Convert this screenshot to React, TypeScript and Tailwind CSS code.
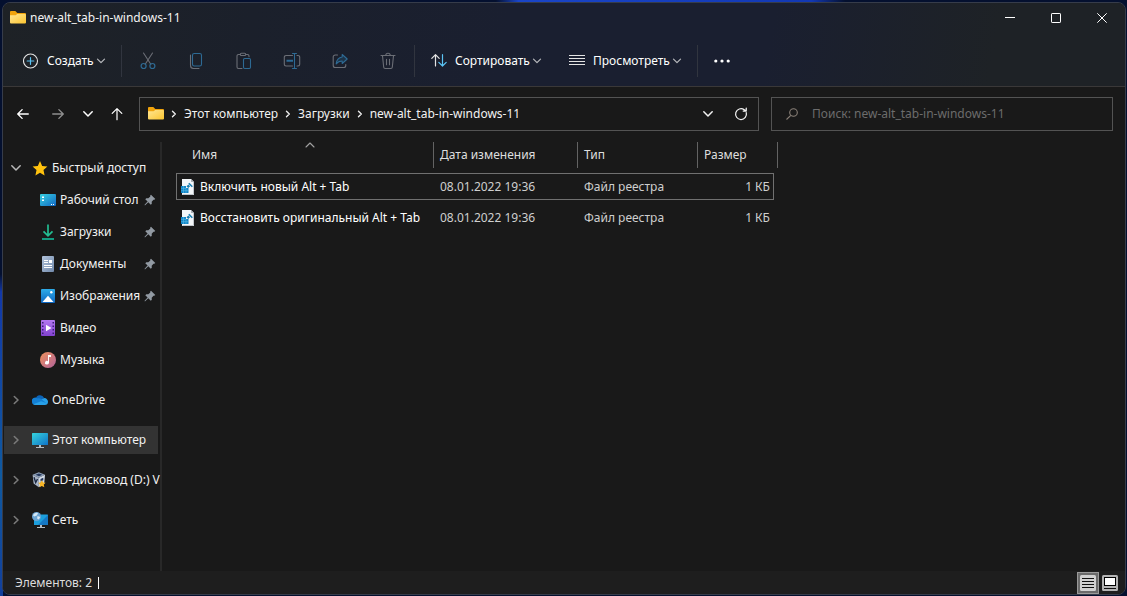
import type { ReactNode } from "react";

type IconProps = { className?: string };

function FolderIcon({ className = "size-4" }: IconProps) {
  return (
    <svg viewBox="0 0 16 16" className={className} aria-hidden="true">
      <defs>
        <linearGradient id="folder-front" x1="0" y1="0" x2="1" y2="1">
          <stop offset="0" stopColor="#ffe694" />
          <stop offset="1" stopColor="#fcc52f" />
        </linearGradient>
      </defs>
      <path d="M0 2a1 1 0 0 1 1-1h4.300l2 2H15a1 1 0 0 1 1 1v8H0z" fill="#f0a30c" />
      <path d="M0 5.200h5.600L7.300 4H15a1 1 0 0 1 1 1v7.500a1 1 0 0 1-1 1H1a1 1 0 0 1-1-1z" fill="url(#folder-front)" />
    </svg>
  );
}

function Stroke({ d, box = 16, width = 1.2, className }: { d: string; box?: number; width?: number; className: string }) {
  return (
    <svg
      viewBox={`0 0 ${box} ${box}`}
      className={className}
      fill="none"
      stroke="currentColor"
      strokeWidth={width}
      strokeLinecap="round"
      strokeLinejoin="round"
      aria-hidden="true"
    >
      <path d={d} />
    </svg>
  );
}

const ChevronDown = ({ className }: { className: string }) => <Stroke box={8} width={1} d="M1.200 2.500 4 5.300l2.800-2.800" className={className} />;

const PlusCircle = () => (
  <svg viewBox="0 0 16 16" className="size-4" fill="none" aria-hidden="true">
    <circle cx="7.500" cy="7" r="7" stroke="#e4e4e4" strokeWidth="1.100" className="translate-y-px" />
    <path d="M7.500 4.700v6.600M4.200 8h6.600" stroke="#5bc4f5" strokeWidth="1.200" strokeLinecap="round" />
  </svg>
);

const CutIcon = () => (
  <svg viewBox="0 0 16 18" className="h-4.5 w-4" fill="none" aria-hidden="true">
    <path d="M3.500 1 10.800 12.300M12.500 1 5.200 12.300" stroke="#6b6e76" strokeWidth="1.100" strokeLinecap="round" />
    <circle cx="3.600" cy="14" r="2.500" stroke="#2d6a94" strokeWidth="1.200" />
    <circle cx="12.400" cy="14" r="2.500" stroke="#2d6a94" strokeWidth="1.200" />
  </svg>
);

const CopyIcon = () => (
  <svg viewBox="0 0 16 18" className="h-4.5 w-4" fill="none" strokeWidth="1.100" aria-hidden="true">
    <path d="M2.500 3v10.500a3 3 0 0 0 3 3H11" stroke="#6b6e76" strokeLinecap="round" />
    <rect x="4.500" y="1.500" width="9" height="12.500" rx="1.800" stroke="#2d6a94" />
  </svg>
);

const PasteIcon = () => (
  <svg viewBox="0 0 16 18" className="h-4.5 w-4" fill="none" strokeWidth="1.100" aria-hidden="true">
    <path d="M6 16.500H2.500a1.500 1.500 0 0 1-1.500-1.500V4a1.500 1.500 0 0 1 1.500-1.500h1.700M9.800 2.500h1.700A1.500 1.500 0 0 1 13 4v.8" stroke="#6b6e76" strokeLinecap="round" />
    <rect x="4.300" y="1.300" width="5.400" height="2.200" rx="1.100" stroke="#6b6e76" />
    <rect x="7.500" y="6.500" width="7" height="10" rx="1.200" stroke="#2d6a94" />
  </svg>
);

const RenameIcon = () => (
  <svg viewBox="0 0 18 18" className="size-4.5" fill="none" strokeWidth="1.100" strokeLinecap="round" aria-hidden="true">
    <path d="M9.500 3.500H3A1.700 1.700 0 0 0 1.300 5.200v7.100A1.700 1.700 0 0 0 3 14h6.500M14 3.500h1A1.700 1.700 0 0 1 16.700 5.200v7.100A1.700 1.700 0 0 1 15 14h-1" stroke="#6b6e76" />
    <path d="M3.500 8.800h6.500" stroke="#2d6a94" strokeWidth="2" strokeLinecap="butt" />
    <path d="M11.500 1.500v15M9.500 1.500h4M9.500 16.500h4" stroke="#2d6a94" />
  </svg>
);

const ShareIcon = () => (
  <svg viewBox="0 0 16 16" className="size-4" fill="none" strokeWidth="1.100" strokeLinejoin="round" strokeLinecap="round" aria-hidden="true">
    <path d="M5.500 2H3.200A2 2 0 0 0 1.200 4v8.500a2 2 0 0 0 2 2h8.600a2 2 0 0 0 2-2V11.500" stroke="#6b6e76" />
    <path d="M10.200 1.500 15.200 6l-5 4.500V8C7.500 8 5.700 8.800 4.200 10.800 4.600 7 6.500 4.500 10.200 4z" fill="#1d3348" stroke="#2d6a94" />
  </svg>
);

const TrashIcon = () => (
  <svg viewBox="0 0 16 18" className="h-4.5 w-4" fill="none" stroke="#6b6e76" strokeWidth="1.100" strokeLinejoin="round" strokeLinecap="round" aria-hidden="true">
    <path d="M1 3.500h14M5.800 3.300a2.200 2 0 0 1 4.400 0M2.500 3.700l1.200 11.500a1.500 1.500 0 0 0 1.500 1.300h5.600a1.500 1.500 0 0 0 1.500-1.300L13.500 3.700M6.500 7.200v5.500M9.500 7.200v5.500" />
  </svg>
);

const SortIcon = () => (
  <svg viewBox="0 0 16 16" className="size-4" fill="none" strokeWidth="1.200" strokeLinejoin="round" strokeLinecap="round" aria-hidden="true">
    <path d="M4.500 13V1.700M.8 5.300l3.700-3.700L8.200 5.300" stroke="#e4e4e4" />
    <path d="M11.500 1.700V13M7.800 9.300l3.700 3.700L15.200 9.300" stroke="#5bc4f5" />
  </svg>
);

const ViewIcon = () => (
  <svg viewBox="0 0 16 16" className="size-4" stroke="#e4e4e4" aria-hidden="true">
    <path d="M0 2.500h16M0 5.500h16M0 8.500h16M0 11.500h16" />
  </svg>
);

const StarIcon = () => (
  <svg viewBox="0 0 16 16" className="size-4" aria-hidden="true">
    <path d="M8 1l2.200 4.900 5.200.6-3.900 3.600 1.100 5.300L8 12.800l-4.600 2.600 1.100-5.300L.6 6.500l5.200-.6z" fill="#ffc20e" />
  </svg>
);

const DesktopIcon = () => (
  <svg viewBox="0 0 16 16" className="size-4" aria-hidden="true">
    <defs>
      <linearGradient id="desk" x1="0" y1="0" x2="1" y2="1">
        <stop offset="0" stopColor="#36d0e0" />
        <stop offset="1" stopColor="#1268c4" />
      </linearGradient>
    </defs>
    <rect y="2" width="16" height="12" rx="1" fill="url(#desk)" />
    <path d="M2 4.500h2v1.500H2zM2 7.500h2V9H2zM11 12h1v1h-1zM13 12h1v1h-1z" fill="#fff" />
  </svg>
);

const DownloadIcon = () => (
  <svg viewBox="0 0 16 16" className="size-4" fill="none" strokeWidth="1.700" aria-hidden="true">
    <path d="M8 .5v11M3.500 7.300 8 11.800 12.500 7.300" stroke="#23bd92" />
    <path d="M2 15h12" stroke="#149a80" strokeWidth="1.800" />
  </svg>
);

const DocumentIcon = () => (
  <svg viewBox="0 0 16 16" className="size-4" aria-hidden="true">
    <defs>
      <linearGradient id="doc" x1="0" y1="0" x2="1" y2="1">
        <stop offset="0" stopColor="#b2c4dc" />
        <stop offset="1" stopColor="#7189ab" />
      </linearGradient>
    </defs>
    <rect x="2" width="12" height="16" rx="1" fill="url(#doc)" />
    <path d="M4 4h4v1H4zM4 6h4v1H4zM9 4h3v3H9zM4 9h8v1H4zM4 11h8v1H4z" fill="#fff" />
  </svg>
);

const PictureIcon = () => (
  <svg viewBox="0 0 16 16" className="size-4" aria-hidden="true">
    <defs>
      <linearGradient id="pic" x1="0" y1="0" x2="0" y2="1">
        <stop offset="0" stopColor="#2eace8" />
        <stop offset="1" stopColor="#0d65c0" />
      </linearGradient>
    </defs>
    <rect x="1" y="1" width="14" height="14" rx="1" fill="url(#pic)" />
    <path d="M2.500 14 8 7.800 13.500 14z" fill="#fff" />
    <circle cx="11.300" cy="4.300" r="1.200" fill="#fff" />
  </svg>
);

const VideoIcon = () => (
  <svg viewBox="0 0 16 16" className="size-4" aria-hidden="true">
    <defs>
      <linearGradient id="vid" x1="0" y1="0" x2="0" y2="1">
        <stop offset="0" stopColor="#b478f0" />
        <stop offset="1" stopColor="#8142cf" />
      </linearGradient>
    </defs>
    <rect x="1" width="14" height="16" rx="1" fill="url(#vid)" />
    <path d="M2 2h1.500v1.500H2zM2 5.500h1.500V7H2zM2 9h1.500v1.500H2zM2 12.500h1.500V14H2zM12.500 2H14v1.500h-1.500zM12.500 5.500H14V7h-1.500zM12.500 9H14v1.500h-1.500zM12.500 12.500H14V14h-1.500z" fill="#3d1d78" />
    <path d="M6 4.700v6.600L11.500 8z" fill="#fff" />
  </svg>
);

const MusicIcon = () => (
  <svg viewBox="0 0 16 16" className="size-4" aria-hidden="true">
    <defs>
      <linearGradient id="mus" x1="0" y1="0" x2="1" y2="1">
        <stop offset="0" stopColor="#f0925c" />
        <stop offset="1" stopColor="#b0629a" />
      </linearGradient>
    </defs>
    <circle cx="8" cy="8" r="8" fill="url(#mus)" />
    <path d="M8 3h3v2H9v5.800A2 1.800 0 1 1 8 9.200z" fill="#fff" />
  </svg>
);

const CloudIcon = () => (
  <svg viewBox="0 0 16 16" className="size-4" aria-hidden="true">
    <path d="M3.800 6.800A4.300 4.300 0 0 1 12 5.800l-2 3.700-7 3.200A3.300 3.300 0 0 1 0 9.800a3.200 3.200 0 0 1 3.800-3z" fill="#0c64b8" />
    <path d="M11.800 6.200A3.500 3.500 0 0 1 16 9.600a3.300 3.300 0 0 1-3.200 3.400H3.200a3 3 0 0 1-2.400-1.200z" fill="#28a0e8" />
    <path d="M5.500 6.500c1.600-.4 3 0 4 .8l4.800 3.600-5.300-1.600-7.800 3A3.200 3.200 0 0 1 0 9.800 3.300 3.300 0 0 1 5.500 6.500z" fill="#137fd4" />
  </svg>
);

const PcIcon = () => (
  <svg viewBox="0 0 16 16" className="size-4" aria-hidden="true">
    <defs>
      <linearGradient id="pc" x1="0" y1="0" x2="1" y2="1">
        <stop offset="0" stopColor="#35d3dc" />
        <stop offset="1" stopColor="#1073c8" />
      </linearGradient>
    </defs>
    <rect y="1" width="16" height="12" rx=".6" fill="url(#pc)" />
    <path d="M7 13h2v2h3V16H4V15h3z" fill="#b5bcc2" />
  </svg>
);

const DiscIcon = () => (
  <svg viewBox="0 0 16 16" className="size-4" aria-hidden="true">
    <path d="M6.800.3 13 2.800 6.800 5.800.6 2.800z" fill="#8fa0b8" />
    <path d="M.6 2.800l6.200 3v9.400L1.600 11.600z" fill="#a9b5c8" />
    <path d="M13 2.800 6.800 5.800v9.400l5.400-3.600z" fill="#d3dce8" />
    <path d="M3.500 2.800 7 1.500l3.300 1.300L7 4.200z" fill="#24365a" />
    <path d="M2 5.200 3.700 10.500l1.800-3.500" stroke="#1b2943" strokeWidth="1.400" fill="none" />
    <path d="M8.500 7l2.800-1.300v2.500L8.500 9.500zM8.500 10.500l2-1v1.500l-2 1.200z" fill="#24365a" />
    <path d="M9.800 8.200l1.300 2.300 2.500.3-1.800 1.800.5 2.700-2.500-1.200-2.300 1.200.5-2.600-1.800-1.900 2.500-.3z" fill="#f7b526" />
  </svg>
);

const NetworkIcon = () => (
  <svg viewBox="0 0 16 16" className="size-4" aria-hidden="true">
    <rect x="2" y="2.500" width="14" height="10.500" rx=".6" fill="#1c9fdc" />
    <path d="M16 3v10H6z" fill="#1578c4" />
    <path d="M8 13h2v2h3v1H5v-1h3z" fill="#b5bcc2" />
    <circle cx="4.500" cy="4.500" r="4.500" fill="#6ba5d4" />
    <path d="M1 3.200C2.500.8 5 .5 6 1.200L4.800 3.400 2.200 4.500zM5.500 4l2.800 1-1.500 2.500-1.700-1z" fill="#d4e8f6" />
  </svg>
);

const PinIcon = () => (
  <svg viewBox="0 0 12 12" className="size-3 shrink-0" aria-hidden="true">
    <path d="M7 .8 11.300 5l-1 .8-.8-.1-1.800 2 .1 2-1 1L4.300 8.300 1.200 11.300H.6v-.6L3.600 7.600 1.300 5.200l1-1 2 .1 2-1.800L6.200 1.500z" fill="#929aa3" />
  </svg>
);

const RegFileIcon = () => (
  <svg viewBox="0 0 14 16" className="h-4 w-3.5 shrink-0" aria-hidden="true">
    <path d="M1 0h9l3 3v13H1z" fill="#f3f6f8" />
    <path d="M10 0v3h3z" fill="#a9b0b5" />
    <path d="M12.500 3v12.500H1.500" stroke="#b4babf" strokeWidth=".8" fill="none" />
    <path d="M0 7h5v2h2.500v5H0z" fill="#1085c7" />
    <path d="M2.500 7v7M5 9v5M0 9.300h5M0 11.700h7.500" stroke="#69c4ed" strokeWidth=".5" />
    <path d="M5.500 7.300 7.300 5.500l1.800 1.800-1.800 1.800z" fill="#1b7eb0" />
    <path d="M7.800 4.300 11.300 7.800" stroke="#1b7eb0" strokeWidth="1.600" />
  </svg>
);

const tools = [
  { label: "Вырезать", icon: <CutIcon /> },
  { label: "Копировать", icon: <CopyIcon /> },
  { label: "Вставить", icon: <PasteIcon /> },
  { label: "Переименовать", icon: <RenameIcon /> },
  { label: "Поделиться", icon: <ShareIcon /> },
  { label: "Удалить", icon: <TrashIcon /> },
];

const quickAccess = [
  { label: "Рабочий стол", icon: <DesktopIcon />, pinned: true },
  { label: "Загрузки", icon: <DownloadIcon />, pinned: true },
  { label: "Документы", icon: <DocumentIcon />, pinned: true },
  { label: "Изображения", icon: <PictureIcon />, pinned: true },
  { label: "Видео", icon: <VideoIcon />, pinned: false },
  { label: "Музыка", icon: <MusicIcon />, pinned: false },
];

const places = [
  { label: "OneDrive", icon: <CloudIcon />, active: false },
  { label: "Этот компьютер", icon: <PcIcon />, active: true },
  { label: "CD-дисковод (D:) V", icon: <DiscIcon />, active: false },
  { label: "Сеть", icon: <NetworkIcon />, active: false },
];

const crumbs = ["Этот компьютер", "Загрузки", "new-alt_tab-in-windows-11"];

const files = [
  { name: "Включить новый Alt + Tab", date: "08.01.2022 19:36", type: "Файл реестра", size: "1 КБ", focused: true },
  { name: "Восстановить оригинальный Alt + Tab", date: "08.01.2022 19:36", type: "Файл реестра", size: "1 КБ", focused: false },
];

function MenuButton({ icon, label }: { icon: ReactNode; label: string }) {
  return (
    <button type="button" className="flex h-8 items-center px-2 whitespace-nowrap text-white">
      {icon}
      <span className="mr-0.5 ml-2">{label}</span>
      <ChevronDown className="size-2.5 text-[#b4b6ba]" />
    </button>
  );
}

const Divider = () => <span className="h-8 w-px shrink-0 bg-[#31353f]" />;

function TitleBar() {
  return (
    <div className="flex h-[29px] items-center">
      <div className="flex flex-1 items-center gap-1 pl-[7px]">
        <FolderIcon />
        <h1>new-alt_tab-in-windows-11</h1>
      </div>
      <button type="button" aria-label="Свернуть" className="grid h-full w-[46px] place-items-center">
        <svg viewBox="0 0 10 10" className="size-2.5" stroke="#fff">
          <path d="M0 4.500h10" />
        </svg>
      </button>
      <button type="button" aria-label="Развернуть" className="grid h-full w-[46px] place-items-center">
        <svg viewBox="0 0 10 10" className="size-2.5" stroke="#fff" fill="none">
          <rect x=".5" y=".5" width="9" height="9" rx=".6" />
        </svg>
      </button>
      <button type="button" aria-label="Закрыть" className="grid h-full w-[46px] place-items-center">
        <svg viewBox="0 0 10 10" className="size-2.5" stroke="#fff" fill="none">
          <path d="M.3.3l9.400 9.400M9.700.3.3 9.700" />
        </svg>
      </button>
    </div>
  );
}

function Toolbar() {
  return (
    <div className="flex h-[54px] items-center pt-1 pl-3">
      <div className="w-[106px]">
        <MenuButton icon={<PlusCircle />} label="Создать" />
      </div>
      <Divider />
      <div className="flex w-[292px] px-0.5">
        {tools.map((tool) => (
          <button key={tool.label} type="button" aria-label={tool.label} disabled className="grid h-8 w-12 place-items-center">
            {tool.icon}
          </button>
        ))}
      </div>
      <Divider />
      <div className="w-[138px] pl-2">
        <MenuButton icon={<SortIcon />} label="Сортировать" />
      </div>
      <div className="w-[144px] pl-2">
        <MenuButton icon={<ViewIcon />} label="Просмотреть" />
      </div>
      <Divider />
      <button type="button" aria-label="Подробнее" className="grid h-8 w-12 place-items-center">
        <svg viewBox="0 0 16 4" className="h-1 w-4" fill="#fff">
          <circle cx="1.800" cy="2" r="1.600" />
          <circle cx="8" cy="2" r="1.600" />
          <circle cx="14.200" cy="2" r="1.600" />
        </svg>
      </button>
    </div>
  );
}

function NavigationRow() {
  return (
    <div className="flex h-[55px] items-start pt-2.5 pr-3">
      <div className="flex h-[34px] w-[136px] shrink-0 items-center pl-1.5">
        <button type="button" aria-label="Назад" className="grid h-8 w-7 place-items-center text-white">
          <Stroke d="M14 8H2.300M7 3 2 8l5 5" width={1.6} className="size-3.5" />
        </button>
        <button type="button" aria-label="Вперед" className="grid h-8 w-[42px] place-items-center text-[#8f8f8f]">
          <Stroke d="M2 8h11.700M9 3l5 5-5 5" width={1.6} className="size-3.5" />
        </button>
        <button type="button" aria-label="Последние расположения" className="grid h-8 w-[18px] place-items-center text-white">
          <ChevronDown className="size-3" />
        </button>
        <button type="button" aria-label="Вверх" className="grid h-8 w-10 place-items-center text-white">
          <Stroke d="M8 14.500V2M2.500 7.300 8 1.800l5.500 5.500" width={1.4} className="size-3.5" />
        </button>
      </div>
      <div className="mr-3 flex h-[34px] min-w-0 flex-1 items-center border border-[#535353] pl-2">
        <FolderIcon className="size-4 shrink-0" />
        <nav aria-label="Путь" className="flex flex-1 items-center pl-1">
          {crumbs.map((crumb, i) => (
            <span key={crumb} className="flex items-center">
              <span className={i === 0 ? "grid w-4 place-items-center pr-1" : "grid w-5 place-items-center"}>
                <Stroke box={8} d="M2.500 1.300 5.300 4 2.500 6.700" width={1.4} className="size-2 text-[#ececec]" />
              </span>
              <button type="button" className="whitespace-nowrap">{crumb}</button>
            </span>
          ))}
        </nav>
        <button type="button" aria-label="Предыдущие расположения" className="grid h-8 w-8 place-items-center">
          <ChevronDown className="size-3" />
        </button>
        <button type="button" aria-label="Обновить" className="grid h-8 w-[34px] place-items-center">
          <Stroke d="M14 6.500A6.200 6.200 0 1 1 11.500 3l2.500 1.500M14 1.200v3.500h-3.500" width={1.4} className="size-3.5" />
        </button>
      </div>
      <label className="flex h-[34px] w-[342px] items-center border border-[#535353] pl-3.5">
        <svg viewBox="0 0 12 12" className="size-3 shrink-0" fill="none" stroke="#8a8078" strokeWidth="1.100" aria-hidden="true">
          <circle cx="7.500" cy="4.500" r="3.800" />
          <path d="M4.800 7.300.5 11.500" />
        </svg>
        <input
          type="text"
          aria-label="Поиск"
          placeholder="Поиск: new-alt_tab-in-windows-11"
          className="ml-3.5 min-w-0 flex-1 bg-transparent outline-none placeholder:text-[#6c6c6c]"
        />
      </label>
    </div>
  );
}

function Sidebar() {
  return (
    <aside className="w-[159px] shrink-0 border-r-2 border-[#282828] pt-3 pl-px">
      <button type="button" className="flex h-7 w-full items-center pl-1.5">
        <ChevronDown className="size-3 shrink-0 text-[#b9b9b9]" />
        <span className="ml-2.5 shrink-0">
          <StarIcon />
        </span>
        <span className="ml-1 whitespace-nowrap">Быстрый доступ</span>
      </button>
      <ul className="flex flex-col gap-1 pt-1">
        {quickAccess.map((item) => (
          <li key={item.label}>
            <a href="#" className="flex h-7 items-center gap-1 pl-9">
              {item.icon}
              <span className="w-20 whitespace-nowrap">{item.label}</span>
              {item.pinned && <PinIcon />}
            </a>
          </li>
        ))}
      </ul>
      <ul className="flex flex-col gap-3 pt-3">
        {places.map((item) => (
          <li key={item.label}>
            <a
              href="#"
              className={
                item.active
                  ? "mr-0.5 flex h-7 items-center bg-[#333333] pl-1.5"
                  : "mr-0.5 flex h-7 items-center pl-1.5"
              }
            >
              <Stroke box={12} d="M4.300 2.500 8 6 4.300 9.500" width={1.6} className="size-3 shrink-0 text-[#7a7a7a]" />
              <span className="ml-2.5 shrink-0">{item.icon}</span>
              <span className="ml-1 whitespace-nowrap">{item.label}</span>
            </a>
          </li>
        ))}
      </ul>
    </aside>
  );
}

function FileTable() {
  return (
    <main className="min-w-0 flex-1 pl-3.5">
      <table className="block">
        <thead className="block">
          <tr className="grid h-[26px] grid-cols-[257px_144px_120px_81px] items-stretch text-left text-[#dedede]">
            <th className="relative flex items-center pl-4 font-normal">
              Имя
              <Stroke box={8} d="M.8 4 4 .8l3.200 3.200" width={0.9} className="absolute top-0 left-[129px] size-2.5 text-[#a0a0a0]" />
            </th>
            <th className="flex items-center border-l border-[#636363] pl-1.5 font-normal">Дата изменения</th>
            <th className="flex items-center border-l border-[#636363] pl-1.5 font-normal">Тип</th>
            <th className="flex items-center border-x border-[#636363] pl-1.5 font-normal">Размер</th>
          </tr>
        </thead>
        <tbody className="flex flex-col gap-1 pt-[5px]">
          {files.map((file) => (
            <tr
              key={file.name}
              className={
                file.focused
                  ? "grid h-[27px] w-[598px] grid-cols-[256px_144px_120px_1fr] items-center border border-[#707070] text-[#cfcfcf]"
                  : "grid h-[27px] w-[598px] grid-cols-[256px_144px_120px_1fr] items-center border border-transparent text-[#cfcfcf]"
              }
            >
              <td className="flex items-center gap-[5px] pl-1 whitespace-nowrap text-white">
                <RegFileIcon />
                {file.name}
              </td>
              <td className="pl-[7px] whitespace-nowrap">{file.date}</td>
              <td className="pl-[7px] whitespace-nowrap">{file.type}</td>
              <td className="pr-[3px] text-right whitespace-nowrap">{file.size}</td>
            </tr>
          ))}
        </tbody>
      </table>
    </main>
  );
}

function StatusBar() {
  return (
    <footer className="flex h-[23px] items-center bg-[#1e1e1e] pr-1.5 pl-3">
      <span className="w-[83px] whitespace-nowrap text-[#dcdcdc]">Элементов: 2</span>
      <span className="h-3 w-px bg-white" />
      <div className="ml-auto flex items-center gap-0.5">
        <button type="button" aria-label="Таблица" className="grid size-[22px] place-items-center border border-[#9a9a9a] bg-[#6b6b6b]">
          <svg viewBox="0 0 16 16" className="size-4">
            <rect width="16" height="16" rx="1.500" fill="#d2d2d2" />
            <path d="M2 3.500h12M2 6.500h12M2 9.500h12M2 12.500h12" stroke="#111" />
          </svg>
        </button>
        <button type="button" aria-label="Крупные эскизы" className="grid h-[22px] w-[18px] place-items-center">
          <svg viewBox="0 0 16 16" className="size-4">
            <rect width="16" height="16" rx="1.500" fill="#b4b4b4" />
            <rect x="2.500" y="2.500" width="11" height="8" fill="#fff" stroke="#000" />
            <path d="M2 13.500h12" stroke="#111" />
          </svg>
        </button>
      </div>
    </footer>
  );
}

export default function App() {
  return (
    <div className="flex min-h-screen flex-col bg-[#04102f] bg-[linear-gradient(90deg,transparent_44%,#1a45c8_46%,#1238b4_72%,transparent_75%),linear-gradient(180deg,#04102f_46%,#1238a8_49%,#0f5aa0_80%,#123f9c_100%)] bg-[length:100%_2px,3px_100%] bg-no-repeat pt-0.5 pr-px pb-px pl-0.5 font-['Noto_Sans','Liberation_Sans',sans-serif] text-xs leading-4 text-[#f2f2f2]">
      <div className="flex flex-1 flex-col overflow-hidden rounded-lg border border-[#363c4a] bg-[#191919]">
        <header className="border-b border-[#3a3838] bg-[linear-gradient(100deg,#1e2226_0%,#1b202b_22%,#1a1f30_45%,#1a1f30_68%,#1e2226_88%)]">
          <TitleBar />
          <Toolbar />
        </header>
        <NavigationRow />
        <div className="flex flex-1">
          <Sidebar />
          <FileTable />
        </div>
        <StatusBar />
      </div>
    </div>
  );
}
